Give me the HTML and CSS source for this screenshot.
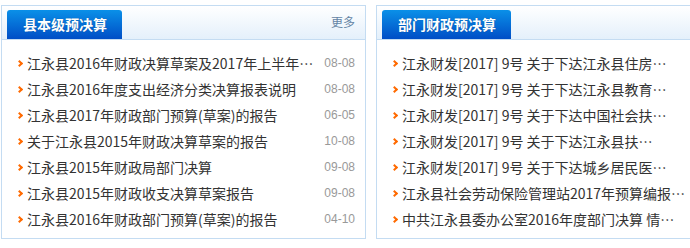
FILE: index.html
```html
<!DOCTYPE html>
<html lang="zh-CN">
<head>
  <meta charset="UTF-8" />
  <title>预决算公开</title>
  <link rel="stylesheet" href="styles.css">
</head>
<body>
<div class="wrap">
  <div class="panel">
    <div class="panel-head">
      <span class="tab">县本级预决算</span>
      <a href="#" class="more">更多</a>
    </div>
    <ul class="news">
      <li><a href="#">江永县2016年财政决算草案及2017年上半年…</a><span class="date">08-08</span></li>
      <li><a href="#">江永县2016年度支出经济分类决算报表说明</a><span class="date">08-08</span></li>
      <li><a href="#">江永县2017年财政部门预算(草案)的报告</a><span class="date">06-05</span></li>
      <li><a href="#">关于江永县2015年财政决算草案的报告</a><span class="date">10-08</span></li>
      <li><a href="#">江永县2015年财政局部门决算</a><span class="date">09-08</span></li>
      <li><a href="#">江永县2015年财政收支决算草案报告</a><span class="date">09-08</span></li>
      <li><a href="#">江永县2016年财政部门预算(草案)的报告</a><span class="date">04-10</span></li>
    </ul>
  </div>

  <div class="panel panel-wide">
    <div class="panel-head">
      <span class="tab">部门财政预决算</span>
    </div>
    <ul class="news">
      <li><a href="#">江永财发[2017] 9号 关于下达江永县住房…</a></li>
      <li><a href="#">江永财发[2017] 9号 关于下达江永县教育…</a></li>
      <li><a href="#">江永财发[2017] 9号 关于下达中国社会扶…</a></li>
      <li><a href="#">江永财发[2017] 9号 关于下达江永县扶…</a></li>
      <li><a href="#">江永财发[2017] 9号 关于下达城乡居民医…</a></li>
      <li><a href="#">江永县社会劳动保险管理站2017年预算编报…</a></li>
      <li><a href="#">中共江永县委办公室2016年度部门决算 情…</a></li>
    </ul>
  </div>
</div>
</body>
</html>
```

FILE: styles.css
```css
html, body { margin: 0; padding: 0; overflow: hidden; background: #fff; }
body { font-family: "Noto Sans CJK SC", "Liberation Sans", sans-serif; color: #333; }
.wrap { display: flex; gap: 10px; padding: 5px 0 0 1px; width: 760px; }
.panel { width: 363px; flex: none; border: 1px solid #c4dcf2; }
.panel-head { height: 33px; display: flex; align-items: flex-end; justify-content: space-between; background: linear-gradient(#ffffff, #e4f0fb); border-bottom: 1px solid #c4dcf2; padding: 0 10px 0 5px; }
.tab { height: 29px; line-height: 29px; padding: 0 15px 0 16px; color: #fff; font-size: 14px; font-weight: 700; border-radius: 3px 3px 0 0; background: linear-gradient(#0a90e8, #004ec6); text-shadow: 0 0 1px rgba(0,0,0,0.3); }
.more { align-self: center; margin-top: -3px; font-size: 12px; color: #6585a5; text-decoration: none; }
.news { list-style: none; margin: 0; padding: 10px 10px 6px 15px; }
.news li { display: flex; align-items: center; height: 26px; }
.news li::before { content: ""; flex: none; width: 3px; height: 3px; margin: 0 5px 0 0; border-top: 2px solid #ff6a00; border-right: 2px solid #ff6a00; transform: rotate(45deg); }
.news a { flex: 1; min-width: 0; white-space: nowrap; overflow: hidden; font-size: 14px; color: #333; text-decoration: none; }
.news .date { flex: none; margin-left: 8px; font-family: "Liberation Sans", sans-serif; font-size: 12px; color: #999; }
```
